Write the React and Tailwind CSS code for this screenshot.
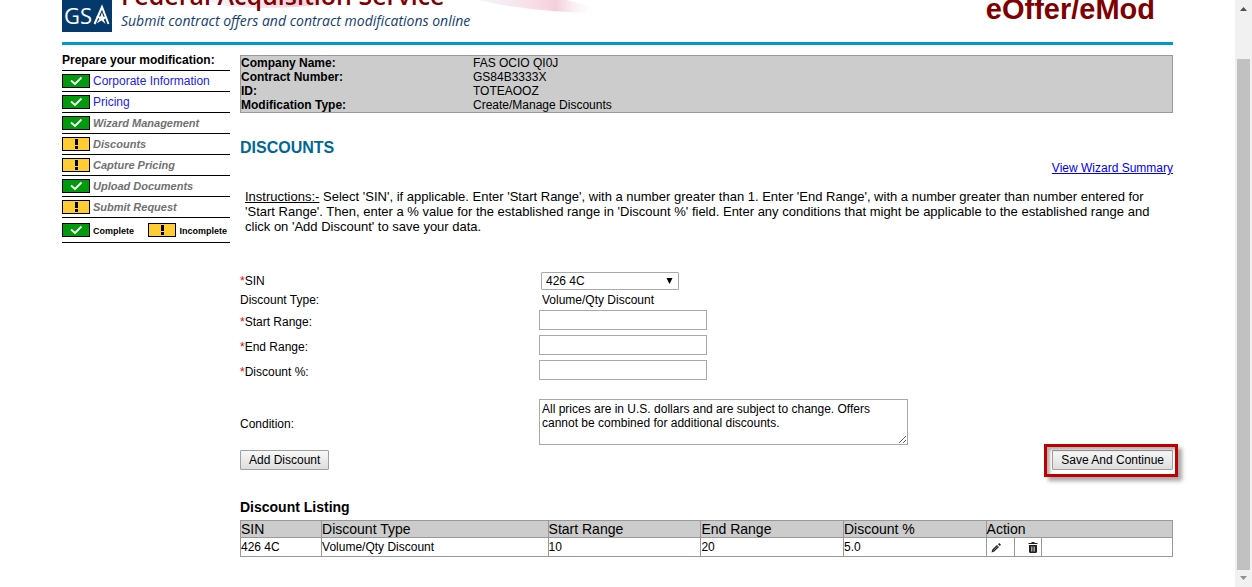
import React from "react";

const steps = [
  { name: "Corporate Information", done: true, link: true },
  { name: "Pricing", done: true, link: true },
  { name: "Wizard Management", done: true },
  { name: "Discounts", done: false },
  { name: "Capture Pricing", done: false },
  { name: "Upload Documents", done: true },
  { name: "Submit Request", done: false },
];

const details = [
  ["Company Name:", "FAS OCIO QI0J"],
  ["Contract Number:", "GS84B3333X"],
  ["ID:", "TOTEAOOZ"],
  ["Modification Type:", "Create/Manage Discounts"],
];

const columns = [
  { name: "SIN", width: "w-[8.7%]" },
  { name: "Discount Type", width: "w-[24.3%]" },
  { name: "Start Range", width: "w-[16.4%]" },
  { name: "End Range", width: "w-[15.3%]" },
  { name: "Discount %", width: "w-[15.3%]" },
  { name: "Action", width: "w-[20%]" },
];

function StatusIcon({ done }) {
  return (
    <svg width="28" height="14" viewBox="0 0 28 14" className="shrink-0" role="img" aria-label={done ? "Complete" : "Incomplete"}>
      <rect x="0.5" y="0.5" width="27" height="13" fill={done ? "#009a0c" : "#ffcc33"} stroke="#000" />
      {done ? (
        <path d="M9 6.5 L13 10 L19.5 3.5" fill="none" stroke="#fff" strokeWidth="1.8" />
      ) : (
        <path d="M13 2h3v6h-3z M13 9h3v3h-3z" fill="#000" />
      )}
    </svg>
  );
}

function GsaLogo() {
  return (
    <div className="flex h-[50px] w-[50px] shrink-0 items-end justify-center bg-[#04396c]">
      <svg width="50" height="32" viewBox="0 0 50 32" role="img" aria-label="GSA">
        <text x="2" y="24" fill="#fff" fontFamily="Open Sans, sans-serif" fontSize="22" fontWeight="500">GS</text>
        <path d="M32.5 24 L40 7 L46.5 24" fill="none" stroke="#fff" strokeWidth="2" />
        <path d="M34 16.500 L38.500 16.500 L40 12 L41.200 16.500 L45 17.500 L41.800 19.500 L43.500 24 L39.500 20.500 L34.500 23.500 L37.500 18.800z" fill="#fff" />
      </svg>
    </div>
  );
}

function Header() {
  return (
    <header className="relative flex h-[45px] items-end justify-between overflow-hidden border-b-[3px] border-[#0099cc]">
      <svg className="absolute bottom-0 left-[140px]" width="400" height="42" viewBox="0 0 400 42" aria-hidden="true">
        <defs>
          <linearGradient id="ribbon" x1="0" x2="1">
            <stop offset="0" stopColor="#dfe5f5" stopOpacity="0.4" />
            <stop offset="0.4" stopColor="#f6d5e0" stopOpacity="0.7" />
            <stop offset="0.65" stopColor="#f3cfdc" />
            <stop offset="1" stopColor="#fff" stopOpacity="0" />
          </linearGradient>
        </defs>
        <path d="M5 0 H150 Q110 8 60 8 Q20 8 5 0z" fill="url(#ribbon)" />
        <path d="M275 0 H365 Q385 5 397 13 Q335 13 275 0z" fill="url(#ribbon)" />
      </svg>
      <div className="relative flex items-end gap-[9px] pb-[10px]">
        <GsaLogo />
        <div className="pb-px font-['Open_Sans',sans-serif] whitespace-nowrap">
          <p className="text-[25px] leading-8 font-semibold text-[#800000]">Federal Acquisition Service</p>
          <p className="text-[14px] leading-5 text-[#13406f] italic">
            Submit contract offers and contract modifications online
          </p>
        </div>
      </div>
      <p className="pr-[18px] pb-[18px] text-[29px] leading-[30px] font-bold text-[#800000]">eOffer/eMod</p>
    </header>
  );
}

function Sidebar() {
  return (
    <nav className="w-[168px] shrink-0" aria-label="Modification steps">
      <h2 className="h-[19px] border-b border-black text-[12px] leading-4 font-bold whitespace-nowrap">
        Prepare your modification:
      </h2>
      <ul>
        {steps.map((s) => (
          <li key={s.name} className="flex h-[21px] items-center gap-[3px] border-b border-black">
            <StatusIcon done={s.done} />
            {s.link ? (
              <a href="#" className="text-[12px] whitespace-nowrap text-[#2222ee]">{s.name}</a>
            ) : (
              <span className="text-[11px] font-bold whitespace-nowrap text-[#707070] italic">{s.name}</span>
            )}
          </li>
        ))}
      </ul>
      <div className="flex h-[25px] items-center justify-between border-b border-black pr-[3px] text-[9px] leading-3 font-bold">
        <span className="flex items-center gap-[3px]"><StatusIcon done /><span className="pt-[2px]">Complete</span></span>
        <span className="flex items-center gap-[3px]"><StatusIcon done={false} /><span className="pt-[2px]">Incomplete</span></span>
      </div>
    </nav>
  );
}

function RangeField({ id, label }) {
  return (
    <div className="flex h-[25px] items-start">
      <label htmlFor={id} className="w-[299px] pt-[4px] leading-4"><span className="text-red-600">*</span>{label}</label>
      <input id={id} type="text" className="h-5 w-[168px] border border-[#a9a9a9] bg-white px-[2px] outline-none" />
    </div>
  );
}

const buttonClass =
  "h-5 rounded-[1px] border border-[#a0a0a0] bg-linear-to-b from-[#f8f8f8] to-[#dddddd] px-2 text-[12px] leading-[18px] whitespace-nowrap text-black";

function DiscountForm() {
  return (
    <form className="pt-[37px] text-[12px]" onSubmit={(e) => e.preventDefault()}>
      <div className="flex h-[19px] items-center">
        <label htmlFor="sin" className="w-[301px]"><span className="text-red-600">*</span>SIN</label>
        <div className="relative">
          <select id="sin" className="block h-[18px] w-[138px] appearance-none rounded-[1px] border border-[#a9a9a9] bg-white px-1 text-[12px] leading-4 outline-none">
            <option>426 4C</option>
          </select>
          <svg className="pointer-events-none absolute top-[6px] right-[6px]" width="7" height="6" viewBox="0 0 7 6" aria-hidden="true">
            <path d="M0.500 0h6L3.500 6z" fill="#000" />
          </svg>
        </div>
      </div>
      <div className="flex h-[19px] items-center">
        <span className="w-[302px]">Discount Type:</span>
        <span>Volume/Qty Discount</span>
      </div>
      <div className="h-[90px] pt-px">
        <RangeField id="start" label="Start Range:" />
        <RangeField id="end" label="End Range:" />
        <RangeField id="percent" label="Discount %:" />
      </div>
      <div className="flex items-center">
        <label htmlFor="condition" className="w-[299px] pt-[3px]">Condition:</label>
        <textarea
          id="condition"
          className="block h-[46px] w-[369px] border border-[#a9a9a9] bg-white px-[2px] py-[2px] text-[12px] leading-[14px] outline-none"
          defaultValue="All prices are in U.S. dollars and are subject to change. Offers cannot be combined for additional discounts."
        />
      </div>
      <div className="flex justify-between pt-[5px]">
        <button type="button" className={buttonClass}>Add Discount</button>
        <div className="relative">
          <button type="submit" className={"block " + buttonClass}>Save And Continue</button>
          <div className="pointer-events-none absolute -top-[6px] -right-[5px] -bottom-[7px] -left-[8px] border-3 border-[#c00000] shadow-[4px_4px_4px_rgba(0,0,0,0.35),inset_3px_3px_3px_rgba(0,0,0,0.3)]" />
        </div>
      </div>
    </form>
  );
}

function DiscountTable() {
  return (
    <section className="pt-[28px]">
      <h2 className="pb-[4px] text-[14px] leading-[18px] font-bold">Discount Listing</h2>
      <table className="w-full table-fixed border-collapse border border-[#999999] text-left text-[12px]">
        <thead>
          <tr className="h-[17px] bg-[#cccccc] text-[14px] leading-4">
            {columns.map((c) => (
              <th key={c.name} scope="col" className={"border border-[#999999] p-0 font-normal " + c.width}>{c.name}</th>
            ))}
          </tr>
        </thead>
        <tbody>
          <tr className="leading-[18px]">
            <td className="border border-[#999999] p-0">426 4C</td>
            <td className="border border-[#999999] p-0">Volume/Qty Discount</td>
            <td className="border border-[#999999] p-0">10</td>
            <td className="border border-[#999999] p-0">20</td>
            <td className="border border-[#999999] p-0">5.0</td>
            <td className="border border-[#999999] p-0">
              <div className="flex h-[18px]">
                <button type="button" aria-label="Edit discount" className="flex w-[28px] items-center border-r border-[#999999] pl-[4px]">
                  <svg width="11" height="11" viewBox="0 0 11 11" aria-hidden="true">
                    <path d="M0.5 10.5 L1.3 7.5 L6 3 L8 5 L3.3 9.5z M7 2.200 L8.200 1 L10 2.800 L8.800 4z" fill="#222" />
                    <path d="M2.500 8.5 L6.800 4.300" stroke="#aaa" strokeWidth="0.7" />
                  </svg>
                </button>
                <button type="button" aria-label="Delete discount" className="flex w-[27px] items-center justify-end border-r border-[#999999] pt-px pr-[3px]">
                  <svg width="10" height="11" viewBox="0 0 10 11" aria-hidden="true">
                    <path d="M0.5 1.5h9 M3.5 0.5h3" stroke="#222" fill="none" />
                    <path d="M1 3h8v6.5q0 1.5-1.5 1.5h-5Q1 11 1 9.5z" fill="#222" />
                    <path d="M3.5 4.5v5 M5 4.5v5 M6.5 4.5v5" stroke="#ddd" strokeWidth="0.7" />
                  </svg>
                </button>
              </div>
            </td>
          </tr>
        </tbody>
      </table>
    </section>
  );
}

function ScrollRail() {
  return (
    <div className="flex w-[17px] shrink-0 flex-col items-center bg-[#f1f1f1]" aria-hidden="true">
      <svg width="17" height="17" viewBox="0 0 17 17"><path d="M5 11h7L8.500 7z" fill="#505050" /></svg>
      <div className="mt-[42px] w-[13px] flex-1 bg-[#c1c1c1]" />
      <svg width="17" height="17" viewBox="0 0 17 17"><path d="M5 6h7L8.500 10z" fill="#909090" /></svg>
    </div>
  );
}

export default function App() {
  return (
    <div className="flex min-h-screen bg-white font-['Liberation_Sans',Arial,sans-serif] text-black">
      <div className="min-w-0 flex-1 px-[62px]">
        <Header />
        <div className="flex gap-[10px] pt-[7px]">
          <Sidebar />
          <main className="min-w-0 flex-1 pt-[3px]">
            <dl className="border border-[#999999] bg-[#cccccc] text-[12px] leading-[14px]">
              {details.map(([k, v]) => (
                <div key={k} className="flex">
                  <dt className="w-[232px] font-bold">{k}</dt>
                  <dd>{v}</dd>
                </div>
              ))}
            </dl>
            <h1 className="pt-[25px] text-[16px] leading-5 font-bold text-[#006699]">DISCOUNTS</h1>
            <div className="flex justify-end pt-[2px] text-[12px] leading-4">
              <a href="#" className="text-[#0000ee] underline">View Wizard Summary</a>
            </div>
            <p className="px-[5px] pt-[13px] text-[13px] leading-[15px]">
              <span className="underline">Instructions:-</span> Select 'SIN', if applicable. Enter 'Start Range', with a number
              greater than 1. Enter 'End Range', with a number greater than number entered for 'Start Range'. Then, enter a %
              value for the established range in 'Discount %' field. Enter any conditions that might be applicable to the
              established range and click on 'Add Discount' to save your data.
            </p>
            <DiscountForm />
            <DiscountTable />
          </main>
        </div>
      </div>
      <ScrollRail />
    </div>
  );
}
